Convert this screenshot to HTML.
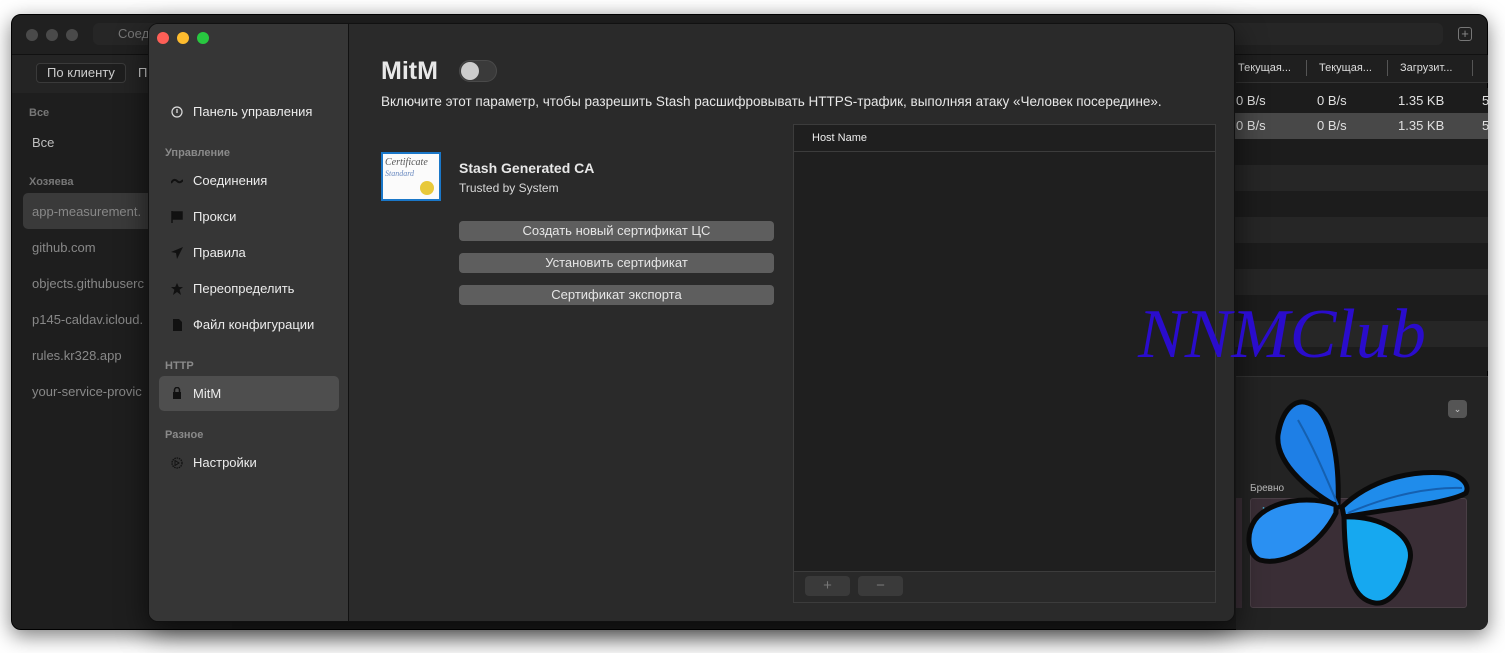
<!DOCTYPE html>
<html><head><meta charset="utf-8"><style>
*{margin:0;padding:0;box-sizing:border-box}
body{width:1505px;height:653px;background:#fff;position:relative;overflow:hidden;font-family:"Liberation Sans",sans-serif;}
.abs{position:absolute}
.back{left:11px;top:14px;width:1477px;height:616px;background:#1c1c1c;border-radius:10px;border:1px solid #000;overflow:hidden;box-shadow:0 6px 20px rgba(0,0,0,.5)}
.dot{width:12px;height:12px;border-radius:50%}
.front{left:148px;top:23px;width:1087px;height:599px;border-radius:10px;border:1px solid #111;overflow:hidden;background:#2a2a2a;box-shadow:0 10px 30px rgba(0,0,0,.6)}
.side{left:0;top:0;width:200px;height:599px;background:#363636;border-right:1px solid #111}
.item{position:absolute;left:10px;width:180px;height:34px;color:#ececec;font-size:13px;line-height:34px;padding-left:34px}
.item svg{position:absolute;left:12px;top:11px}
.hd{position:absolute;left:16px;font-size:11px;color:#8a8a8a;font-weight:bold}
.btn{position:absolute;left:311px;width:315px;height:20px;background:#5e5e5e;border-radius:4px;color:#e6e6e6;font-size:13px;text-align:center;line-height:20px}
.bs{position:absolute;color:#bfbfbf;font-size:13px}
.row{position:absolute;left:1226px;width:262px;height:26px}
.cell{position:absolute;color:#e0e0e0;font-size:13px;top:5px}
</style></head><body>
<div class="abs back">
 <div class="abs" style="left:0;top:0;width:1477px;height:40px;background:#202020;border-bottom:1px solid #111"></div>
 <div class="abs dot" style="left:14px;top:14px;background:#4a4a4a"></div>
 <div class="abs dot" style="left:34px;top:14px;background:#4a4a4a"></div>
 <div class="abs dot" style="left:54px;top:14px;background:#4a4a4a"></div>
 <div class="abs" style="left:81px;top:8px;width:1350px;height:22px;background:#262626;border-radius:6px;color:#777;font-size:13px;line-height:22px;padding-left:25px">Соед</div>
 <div class="abs" style="left:1446px;top:12px;width:14px;height:14px;border:1px solid #777;border-radius:3px;color:#888;font-size:13px;line-height:11px;text-align:center">+</div>
 <div class="abs" style="left:0;top:40px;width:220px;height:576px;background:#1e1e1e"></div>
 <div class="abs" style="left:0;top:40px;width:220px;height:38px;background:#242424"></div>
 <div class="abs" style="left:24px;top:48px;width:90px;height:20px;border:1px solid #3a3a3a;border-radius:4px;color:#ccc;font-size:13px;line-height:18px;text-align:center;background:#1e1e1e">По клиенту</div>
 <div class="abs" style="left:126px;top:50px;color:#ccc;font-size:13px">П</div>
 <div class="abs" style="left:17px;top:92px;font-size:11px;color:#777;font-weight:bold">Все</div>
 <div class="bs" style="left:20px;top:120px">Все</div>
 <div class="abs" style="left:17px;top:161px;font-size:11px;color:#777;font-weight:bold">Хозяева</div>
 <div class="abs" style="left:11px;top:178px;width:140px;height:36px;background:#3a3a3a;border-radius:5px"></div>
 <div class="bs" style="left:20px;top:189px;color:#888">app-measurement.</div>
 <div class="bs" style="left:20px;top:225px;color:#888">github.com</div>
 <div class="bs" style="left:20px;top:261px;color:#888">objects.githubuserc</div>
 <div class="bs" style="left:20px;top:297px;color:#888">p145-caldav.icloud.</div>
 <div class="bs" style="left:20px;top:333px;color:#888">rules.kr328.app</div>
 <div class="bs" style="left:20px;top:369px;color:#888">your-service-provic</div>
</div>
<div class="abs" style="left:1236px;top:55px;width:252px;height:28px;background:#1f1f1f;border-bottom:1px solid #333"></div>
<div class="cell abs" style="left:1238px;top:62px;font-size:11px;color:#ddd">Текущая...</div>
<div class="abs" style="left:1306px;top:60px;width:1px;height:16px;background:#555"></div>
<div class="cell abs" style="left:1319px;top:62px;font-size:11px;color:#ddd">Текущая...</div>
<div class="abs" style="left:1387px;top:60px;width:1px;height:16px;background:#555"></div>
<div class="cell abs" style="left:1400px;top:62px;font-size:11px;color:#ddd">Загрузит...</div>
<div class="abs" style="left:1472px;top:60px;width:1px;height:16px;background:#555"></div>
<div class="row" style="top:88px;background:#1c1c1c"><span class="cell" style="left:10px">0 B/s</span><span class="cell" style="left:91px">0 B/s</span><span class="cell" style="left:172px">1.35 KB</span><span class="cell" style="left:256px">5</span></div>
<div class="row" style="top:113px;background:#484848"><span class="cell" style="left:10px">0 B/s</span><span class="cell" style="left:91px">0 B/s</span><span class="cell" style="left:172px">1.35 KB</span><span class="cell" style="left:256px">5</span></div>
<div class="row" style="top:139px;background:#1c1c1c"></div>
<div class="row" style="top:165px;background:#262626"></div>
<div class="row" style="top:191px;background:#1c1c1c"></div>
<div class="row" style="top:217px;background:#262626"></div>
<div class="row" style="top:243px;background:#1c1c1c"></div>
<div class="row" style="top:269px;background:#262626"></div>
<div class="row" style="top:295px;background:#1c1c1c"></div>
<div class="row" style="top:321px;background:#262626"></div>
<div class="row" style="top:347px;background:#1c1c1c;height:24px"></div>
<div class="abs" style="left:1236px;top:376px;width:252px;height:254px;background:#232323;border-top:1px solid #333;border-radius:0 0 10px 0"></div>
<div class="abs" style="left:1448px;top:400px;width:19px;height:18px;background:#555;border-radius:4px;color:#ccc;font-size:9px;text-align:center;line-height:18px">⌄</div>
<div class="abs" style="left:1250px;top:483px;color:#bbb;font-size:10px">Бревно</div>
<div class="abs" style="left:1250px;top:498px;width:217px;height:110px;background:#3a2e36;border:1px solid #4a3f46;border-radius:3px"></div>
<div class="abs" style="left:1236px;top:498px;width:6px;height:110px;background:#3a2e36"></div>
<div class="abs" style="left:1262px;top:506px;color:#44a0c0;font-size:10px">N/A</div>
<div class="abs front">
 <div class="abs side">
  <div class="abs dot" style="left:8px;top:8px;background:#fe5f57"></div>
  <div class="abs dot" style="left:28px;top:8px;background:#febc2e"></div>
  <div class="abs dot" style="left:48px;top:8px;background:#28c840"></div>
  <div class="item" style="top:71px"><svg width="12" height="12" viewBox="0 0 12 12"><circle cx="6" cy="6" r="5" fill="none" stroke="#ddd" stroke-width="1.2"/><path d="M6 3v4" stroke="#ddd" stroke-width="1.3"/></svg>Панель управления</div>
  <div class="hd" style="top:123px">Управление</div>
  <div class="item" style="top:140px"><svg width="12" height="12" viewBox="0 0 12 12"><path d="M0 8 Q3 3 6 6 T12 5" fill="none" stroke="#111" stroke-width="2"/></svg>Соединения</div>
  <div class="item" style="top:176px"><svg width="12" height="12" viewBox="0 0 12 12"><path d="M1 0v12M1 1h10v7H1" fill="#111" stroke="#111" stroke-width="1.5"/></svg>Прокси</div>
  <div class="item" style="top:212px"><svg width="12" height="12" viewBox="0 0 12 12"><path d="M12 0L0 5l5 1 1 6z" fill="#111"/></svg>Правила</div>
  <div class="item" style="top:248px"><svg width="12" height="12" viewBox="0 0 12 12"><path d="M6 0l1.8 4H12L8.6 6.8 10 12 6 9 2 12l1.4-5.2L0 4h4.2z" fill="#111"/></svg>Переопределить</div>
  <div class="item" style="top:284px"><svg width="12" height="12" viewBox="0 0 12 12"><path d="M2 0h6l3 3v9H2z" fill="#111"/></svg>Файл конфигурации</div>
  <div class="hd" style="top:336px">HTTP</div>
  <div class="item" style="top:352px;background:#4e4e4e;border-radius:5px;height:35px;line-height:35px"><svg width="12" height="12" viewBox="0 0 12 12"><rect x="2" y="5" width="8" height="7" fill="#111"/><path d="M3.5 5V3a2.5 2.5 0 015 0v2" fill="none" stroke="#111" stroke-width="1.5"/></svg>MitM</div>
  <div class="hd" style="top:405px">Разное</div>
  <div class="item" style="top:422px"><svg width="12" height="12" viewBox="0 0 12 12"><circle cx="6" cy="6" r="5" fill="none" stroke="#111" stroke-width="1.3" stroke-dasharray="1.5 .8"/><path d="M4 3.5l4 2.5-4 2.5z" fill="none" stroke="#111"/></svg>Настройки</div>
 </div>
 <div class="abs" style="left:232px;top:33px;color:#e8e8e8;font-size:25px;font-weight:bold">MitM</div>
 <div class="abs" style="left:310px;top:36px;width:38px;height:22px;border-radius:11px;background:#3a3a3a;border:1px solid #4a4a4a"><div style="position:absolute;left:1px;top:1px;width:18px;height:18px;border-radius:50%;background:#ccc"></div></div>
 <div class="abs" style="left:232px;top:70px;color:#e8e8e8;font-size:13.5px;white-space:nowrap">Включите этот параметр, чтобы разрешить Stash расшифровывать HTTPS-трафик, выполняя атаку «Человек посередине».</div>
 <div class="abs" style="left:232px;top:128px;width:60px;height:49px;background:#1a77c8;padding:2px"><div style="width:100%;height:100%;background:#fbfbfb;position:relative;font-family:'Liberation Serif',serif;font-style:italic;font-size:10px;color:#555;padding:3px 2px">Certificate<br><span style="color:#6a8ac0;font-size:8px">Standard</span><div style="position:absolute;right:5px;bottom:4px;width:14px;height:14px;border-radius:50%;background:#e8c93a"></div></div></div>
 <div class="abs" style="left:310px;top:136px;color:#e8e8e8;font-size:14px;font-weight:bold">Stash Generated CA</div>
 <div class="abs" style="left:310px;top:157px;color:#d8d8d8;font-size:12px">Trusted by System</div>
 <div class="btn" style="top:197px;left:310px">Создать новый сертификат ЦС</div>
 <div class="btn" style="top:229px;left:310px">Установить сертификат</div>
 <div class="btn" style="top:261px;left:310px">Сертификат экспорта</div>
 <div class="abs" style="left:644px;top:100px;width:423px;height:479px;background:#1f1f1f;border:1px solid #3c3c3c"></div>
 <div class="abs" style="left:645px;top:101px;width:421px;height:27px;border-bottom:1px solid #3c3c3c"></div>
 <div class="abs" style="left:663px;top:108px;color:#eee;font-size:11px">Host Name</div>
 <div class="abs" style="left:645px;top:547px;width:421px;height:31px;background:#292929;border-top:1px solid #3c3c3c"></div>
 <div class="abs" style="left:656px;top:552px;width:45px;height:20px;background:#3a3a3a;border-radius:4px;color:#777;text-align:center;line-height:20px;font-size:15px">+</div>
 <div class="abs" style="left:709px;top:552px;width:45px;height:20px;background:#3a3a3a;border-radius:4px;color:#777;text-align:center;line-height:19px;font-size:15px">−</div>
</div>
<svg class="abs" style="left:1240px;top:395px" width="240" height="215" viewBox="0 0 240 215">
 <g stroke="#0a0a0a" stroke-width="5" stroke-linejoin="round">
 <path d="M98 112 C75 100 35 70 38 40 C42 15 55 3 68 8 C90 15 100 60 98 112Z" fill="#1e7fe6"/>
 <path d="M96 110 C70 100 30 105 15 125 C5 140 8 160 20 165 C45 172 80 150 96 118Z" fill="#2a90f2"/>
 <path d="M102 112 C130 85 170 75 205 78 C222 80 230 90 226 98 C210 108 160 112 104 122Z" fill="#1f8ceb"/>
 <path d="M104 122 C140 120 175 140 170 165 C165 190 150 210 135 208 C115 205 105 185 104 122Z" fill="#16a8f0"/>
 </g>
 <path d="M98 110 C85 80 75 55 58 25" stroke="#1560b0" stroke-width="2" fill="none"/>
 <path d="M108 118 C150 100 190 92 222 93" stroke="#1560b0" stroke-width="2" fill="none"/>
</svg>
<div class="abs" style="left:1138px;top:295px;font-family:'Liberation Serif',serif;font-style:italic;font-size:70px;color:#2a0ccc;line-height:80px">NNMClub</div>
</body></html>
